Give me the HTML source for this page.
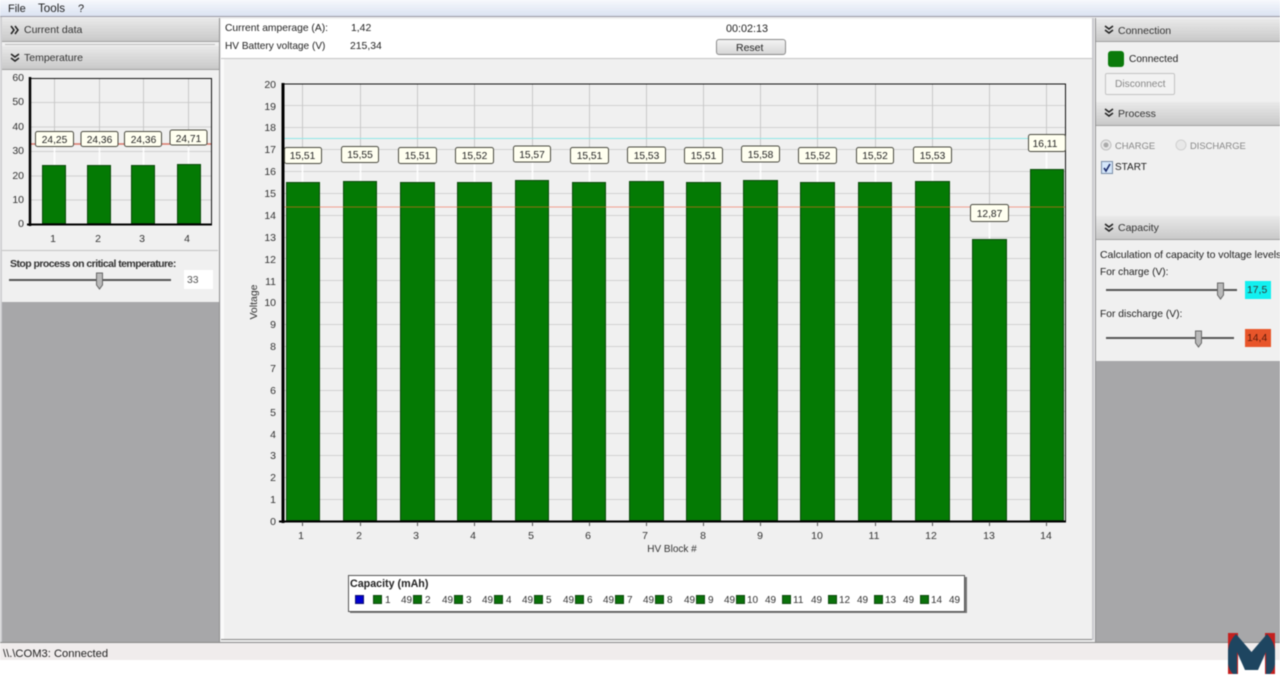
<!DOCTYPE html>
<html lang="en">
<head>
<meta charset="utf-8">
<title>Battery Monitor</title>
<style>
html,body{margin:0;padding:0;width:1280px;height:679px;overflow:hidden;background:#fff}
body{font-family:"Liberation Sans",sans-serif;font-size:10.4px;color:#222}
#root{position:absolute;left:0;top:0;width:1280px;height:679px;filter:blur(.4px);overflow:hidden}
.a{position:absolute}
.t{position:absolute;white-space:nowrap;line-height:14px;margin-top:1px}
.hd{position:absolute;background:linear-gradient(#e9e9e9,#c9c9c9);border-bottom:1px solid #a0a0a0;box-sizing:border-box}
.hd span{position:absolute;left:22px;top:5px;line-height:14px;color:#333;font-size:10.5px}
.hd svg{position:absolute;left:6px;top:7px}
svg text{font-family:"Liberation Sans",sans-serif}
</style>
</head>
<body>
<div id="root">
<!-- window bg -->
<div class="a" style="left:0;top:0;width:1280px;height:660px;background:#eeeeef"></div>
<div class="a" style="left:0;top:660px;width:1280px;height:19px;background:#fff"></div>
<div class="a" style="left:2px;top:302px;width:217px;height:341px;background:#a7a7a9"></div>
<div class="a" style="left:1096px;top:361px;width:184px;height:282px;background:#a7a7a9"></div>
<div class="a" style="left:0;top:17px;width:2px;height:626px;background:#cfcfd2"></div>
<div class="a" style="left:219px;top:18px;width:1px;height:625px;background:#8f8f8f"></div>
<div class="a" style="left:1095px;top:18px;width:1px;height:625px;background:#909092"></div>
<div class="a" style="left:1092px;top:18px;width:2px;height:622px;background:#c9c9cd"></div>
<!-- menu -->
<div class="a" style="left:0;top:0;width:1280px;height:17px;background:linear-gradient(#f6f8fc,#dbe3f2);border-bottom:1px solid #9a9aa4;box-sizing:border-box"></div>
<div class="t" style="left:8px;top:1px;font-size:11px">File</div>
<div class="t" style="left:38px;top:1px;font-size:11.600px">Tools</div>
<div class="t" style="left:78px;top:1px;font-size:11px">?</div>

<!-- left column -->
<div class="a" style="left:2px;top:18px;width:217px;height:284px;background:#f0f0f0"></div>
<div class="hd" style="left:2px;top:18px;width:217px;height:24px"><svg width="14" height="10" viewBox="0 0 10 10"><path d="M1 1l3 4-3 4M5 1l3 4-3 4" fill="none" stroke="#222" stroke-width="1.500"/></svg><span style="top:5px">Current data</span></div>
<div class="a" style="left:5px;top:44px;width:210px;height:1px;background:#bbb"></div>
<div class="hd" style="left:2px;top:46px;width:217px;height:24px"><svg width="14" height="10" viewBox="0 0 10 10"><path d="M1 1l4 3 4-3M1 5l4 3 4-3" fill="none" stroke="#222" stroke-width="1.500"/></svg><span style="top:5px">Temperature</span></div>
<div class="a" style="left:2px;top:250px;width:216px;height:1px;background:#c4c4c4"></div>

<svg class="a" style="left:0;top:70px" width="220" height="180" viewBox="0 70 220 180">
<g stroke="#cfcfcf" stroke-width="1">
<path d="M30 102.500H212M30 127H212M30 151.500H212M30 176H212M30 200H212"/>
<path d="M54.500 78V224M99.500 78V224M143.500 78V224M188.500 78V224" stroke="#c8c8c8"/>
</g>
<path d="M30 144H212" stroke="#d9786a" stroke-width="1.500"/>
<path d="M54.500 147V165M99.500 147V165M143.500 147V165M188.500 147V164" stroke="#fff" stroke-width="1.500"/>
<g fill="#047a04" stroke="#0c4a0c" stroke-width="1">
<rect x="42.500" y="165.500" width="23" height="58"/>
<rect x="87.500" y="165.500" width="23" height="58"/>
<rect x="131.500" y="165.500" width="23" height="58"/>
<rect x="177.500" y="164.500" width="23" height="59"/>
</g>
<path d="M30.500 78.500H211.500V224" fill="none" stroke="#111" stroke-width="1"/>
<path d="M30 77V226" stroke="#000" stroke-width="2.500"/>
<path d="M27 224.500H212" stroke="#000" stroke-width="2"/>
<g fill="#fffff0" stroke="#4a4a40" stroke-width="1">
<rect x="35.500" y="131.500" width="38" height="15" rx="2"/>
<rect x="81" y="131.500" width="37" height="15" rx="2"/>
<rect x="124.500" y="131.500" width="37" height="15" rx="2"/>
<rect x="170" y="130" width="37" height="15" rx="2"/>
</g>
<g font-size="10.200" fill="#222" text-anchor="middle">
<text x="54.500" y="143">24,25</text><text x="99.500" y="143">24,36</text><text x="143.500" y="143">24,36</text><text x="188.500" y="142">24,71</text>
</g>
<g font-size="10.500" fill="#333" text-anchor="end">
<text x="24" y="81">60</text><text x="24" y="105">50</text><text x="24" y="130">40</text><text x="24" y="154">30</text><text x="24" y="179">20</text><text x="24" y="203">10</text><text x="24" y="227">0</text>
</g>
<g font-size="10.500" fill="#333" text-anchor="middle">
<text x="53" y="242">1</text><text x="98" y="242">2</text><text x="142" y="242">3</text><text x="187" y="242">4</text>
</g>
</svg>
<div class="t" style="left:10px;top:256px;font-size:10.500px;font-weight:bold;letter-spacing:-.55px;color:#333">Stop process on critical temperature:</div>
<div class="a" style="left:9px;top:279px;width:162px;height:2px;background:#555"></div>
<svg class="a" style="left:95px;top:272px" width="9" height="18" viewBox="0 0 9 18"><path d="M1.500 1H7.500V13L4.500 17L1.500 13Z" fill="#b9b9b9" stroke="#666"/></svg>
<div class="a" style="left:184px;top:270px;width:29px;height:19px;background:#fff"></div>
<div class="t" style="left:187px;top:273px;color:#555">33</div>

<!-- center -->
<div class="a" style="left:221px;top:18px;width:871px;height:621px;background:#f0f0f0;border-bottom:1px solid #8a8a8a"></div>
<div class="a" style="left:221px;top:59px;width:3px;height:580px;background:#fafafa"></div>
<div class="a" style="left:221px;top:19px;width:871px;height:39px;background:#fff;border-bottom:1px solid #c4c4c4"></div>
<div class="t" style="left:225px;top:21px;font-size:10.300px">Current amperage (A):</div>
<div class="t" style="left:351px;top:21px">1,42</div>
<div class="t" style="left:225px;top:39px;font-size:10.100px">HV Battery voltage (V)</div>
<div class="t" style="left:350px;top:39px">215,34</div>
<div class="t" style="left:726px;top:21px;font-size:10.800px">00:02:13</div>
<div class="a" style="left:716px;top:39px;width:68px;height:14px;border:1px solid #8a8a8a;border-radius:3px;background:linear-gradient(#f4f4f4,#d8d8d8)"></div>
<div class="t" style="left:736px;top:40px;font-size:10.500px">Reset</div>

<svg class="a" style="left:221px;top:60px" width="870" height="578" viewBox="221 60 870 578">
<g stroke="#d2d2d2" stroke-width="1">
<path d="M283 105.500H1065M283 127.500H1065M283 149.500H1065M283 171.500H1065M283 193.500H1065M283 215.500H1065M283 237.500H1065M283 258.500H1065M283 280.500H1065M283 302.500H1065M283 324.500H1065M283 346.500H1065M283 368.500H1065M283 390.500H1065M283 411.500H1065M283 433.500H1065M283 455.500H1065M283 477.500H1065M283 499.500H1065"/>
<path stroke="#c8c8c8" d="M302.500 84V521M360.500 84V521M417.500 84V521M474.500 84V521M532.500 84V521M589.500 84V521M646.500 84V521M703.500 84V521M760.500 84V521M817.500 84V521M875.500 84V521M932.500 84V521M989.500 84V521M1046.500 84V521"/>
</g>
<path d="M283 138.500H1065" stroke="#8fe8e8" stroke-width="1"/>
<path d="M283 207H1065" stroke="#f0a090" stroke-width="1"/>
<path stroke="#fff" stroke-width="1.500" d="M302.500 163V182M360.500 163V181M417.500 163V182M474.500 163V182M532.500 161V181M589.500 163V182M646.500 163V182M703.500 163V182M760.500 161V181M817.500 163V182M875.500 163V182M932.500 163V182M989.500 222V240M1046.500 151V169"/>
<g fill="#047a04" stroke="#0c4a0c" stroke-width="1">
<rect x="286.500" y="182.500" width="33" height="338"/>
<rect x="343.500" y="181.500" width="33" height="339"/>
<rect x="400.500" y="182.500" width="34" height="338"/>
<rect x="457.500" y="182.500" width="34" height="338"/>
<rect x="515.500" y="180.500" width="33" height="340"/>
<rect x="572.500" y="182.500" width="33" height="338"/>
<rect x="629.500" y="181.500" width="34" height="339"/>
<rect x="686.500" y="182.500" width="34" height="338"/>
<rect x="743.500" y="180.500" width="34" height="340"/>
<rect x="800.500" y="182.500" width="34" height="338"/>
<rect x="858.500" y="182.500" width="33" height="338"/>
<rect x="915.500" y="181.500" width="34" height="339"/>
<rect x="972.500" y="239.500" width="34" height="281"/>
<rect x="1030.500" y="169.500" width="33" height="351"/>
</g>
<path d="M286 207H320M343 207H377M400 207H435M457 207H492M515 207H549M572 207H606M629 207H664M686 207H721M743 207H778M800 207H835M858 207H892M915 207H950M1030 207H1064" stroke="#8a7212" stroke-width="1"/>
<path d="M283.500 84H1065.500V522" fill="none" stroke="#111" stroke-width="1"/>
<path d="M283 83V523" stroke="#000" stroke-width="3"/>
<path d="M279 521.500H1066" stroke="#000" stroke-width="2"/>
<path stroke="#555" d="M302.500 522V526M360.500 522V526M417.500 522V526M474.500 522V526M532.500 522V526M589.500 522V526M646.500 522V526M703.500 522V526M760.500 522V526M817.500 522V526M875.500 522V526M932.500 522V526M989.500 522V526M1046.500 522V526"/>
<g fill="#fffff0" stroke="#4a4a40" stroke-width="1">
<rect x="284.500" y="147.500" width="37" height="16" rx="2"/>
<rect x="341.500" y="146.500" width="37" height="16" rx="2"/>
<rect x="398.500" y="147.500" width="38" height="16" rx="2"/>
<rect x="455.500" y="147.500" width="38" height="16" rx="2"/>
<rect x="513.500" y="146" width="37" height="16" rx="2"/>
<rect x="570.500" y="147.500" width="38" height="16" rx="2"/>
<rect x="627.500" y="147" width="38" height="16" rx="2"/>
<rect x="684.500" y="147.500" width="38" height="16" rx="2"/>
<rect x="741.500" y="146" width="38" height="16" rx="2"/>
<rect x="798.500" y="147.500" width="38" height="16" rx="2"/>
<rect x="856.500" y="147.500" width="37" height="16" rx="2"/>
<rect x="913.500" y="147" width="38" height="16" rx="2"/>
<rect x="970.500" y="204.500" width="38" height="17" rx="2"/>
<rect x="1028.500" y="134.500" width="37" height="17" rx="2"/>
</g>
<g font-size="10.200" fill="#222" text-anchor="middle">
<text x="302.500" y="159">15,51</text><text x="360" y="158">15,55</text><text x="417.500" y="159">15,51</text><text x="474.500" y="159">15,52</text><text x="532" y="158">15,57</text><text x="589.500" y="159">15,51</text><text x="646.500" y="159">15,53</text><text x="703.500" y="159">15,51</text><text x="760.500" y="158">15,58</text><text x="817.500" y="159">15,52</text><text x="875" y="159">15,52</text><text x="932.500" y="159">15,53</text><text x="989.500" y="217">12,87</text><text x="1045" y="147">16,11</text>
</g>
<g font-size="10.500" fill="#333" text-anchor="end">
<text x="276" y="88">20</text><text x="276" y="110">19</text><text x="276" y="131">18</text><text x="276" y="153">17</text><text x="276" y="175">16</text><text x="276" y="197">15</text><text x="276" y="219">14</text><text x="276" y="241">13</text><text x="276" y="263">12</text><text x="276" y="285">11</text><text x="276" y="306">10</text><text x="276" y="328">9</text><text x="276" y="350">8</text><text x="276" y="372">7</text><text x="276" y="394">6</text><text x="276" y="416">5</text><text x="276" y="438">4</text><text x="276" y="459">3</text><text x="276" y="481">2</text><text x="276" y="503">1</text><text x="276" y="525">0</text>
</g>
<g font-size="10.500" fill="#333" text-anchor="middle">
<text x="301" y="539">1</text><text x="359" y="539">2</text><text x="416" y="539">3</text><text x="473" y="539">4</text><text x="531" y="539">5</text><text x="588" y="539">6</text><text x="645" y="539">7</text><text x="703" y="539">8</text><text x="760" y="539">9</text><text x="817" y="539">10</text><text x="874" y="539">11</text><text x="931" y="539">12</text><text x="989" y="539">13</text><text x="1046" y="539">14</text>
</g>
<text x="672" y="552" font-size="10" fill="#333" text-anchor="middle">HV Block #</text>
<text transform="translate(257 302) rotate(-90)" font-size="10.500" fill="#333" text-anchor="middle">Voltage</text>
<!-- legend -->
<rect x="350" y="577" width="617" height="36" fill="#777"/>
<rect x="348.500" y="575.500" width="616" height="36" fill="#fff" stroke="#555"/>
<text x="350" y="587" font-size="10.700" font-weight="bold" fill="#222">Capacity (mAh)</text>
<g stroke="#0f4a0f" fill="#0a720a">
<rect x="355.500" y="595.500" width="8" height="8" fill="#0000d0" stroke="#101070"/>
<rect x="373.500" y="595.500" width="8" height="8"/><rect x="413.500" y="595.500" width="8" height="8"/><rect x="454.500" y="595.500" width="8" height="8"/><rect x="494.500" y="595.500" width="8" height="8"/><rect x="534.500" y="595.500" width="8" height="8"/><rect x="575.500" y="595.500" width="8" height="8"/><rect x="615.500" y="595.500" width="8" height="8"/><rect x="655.500" y="595.500" width="8" height="8"/><rect x="696.500" y="595.500" width="8" height="8"/><rect x="736.500" y="595.500" width="8" height="8"/><rect x="782.500" y="595.500" width="8" height="8"/><rect x="828.500" y="595.500" width="8" height="8"/><rect x="874.500" y="595.500" width="8" height="8"/><rect x="920.500" y="595.500" width="8" height="8"/>
</g>
<g font-size="10" fill="#333">
<text x="385" y="603">1</text><text x="401" y="603">49</text>
<text x="425" y="603">2</text><text x="442" y="603">49</text>
<text x="466" y="603">3</text><text x="482" y="603">49</text>
<text x="506" y="603">4</text><text x="522" y="603">49</text>
<text x="546" y="603">5</text><text x="563" y="603">49</text>
<text x="587" y="603">6</text><text x="603" y="603">49</text>
<text x="627" y="603">7</text><text x="643" y="603">49</text>
<text x="667" y="603">8</text><text x="684" y="603">49</text>
<text x="708" y="603">9</text><text x="724" y="603">49</text>
<text x="747" y="603">10</text><text x="765" y="603">49</text>
<text x="793" y="603">11</text><text x="811" y="603">49</text>
<text x="839" y="603">12</text><text x="857" y="603">49</text>
<text x="885" y="603">13</text><text x="903" y="603">49</text>
<text x="931" y="603">14</text><text x="949" y="603">49</text>
</g>
</svg>

<!-- right column -->
<div class="a" style="left:1096px;top:19px;width:184px;height:342px;background:#f0f0f0"></div>
<div class="hd" style="left:1096px;top:19px;width:184px;height:23px"><svg width="14" height="10" viewBox="0 0 10 10" style="top:6px"><path d="M1 1l4 3 4-3M1 5l4 3 4-3" fill="none" stroke="#222" stroke-width="1.500"/></svg><span>Connection</span></div>
<div class="a" style="left:1108px;top:51px;width:16px;height:16px;border-radius:3px;background:#0b7a0b"></div>
<div class="t" style="left:1129px;top:52px;font-size:10.200px">Connected</div>
<div class="a" style="left:1105px;top:73px;width:68px;height:20px;border:1px solid #c4c4c4;border-radius:2px;background:#f2f2f2"></div>
<div class="t" style="left:1115px;top:77px;color:#888;font-size:10.200px">Disconnect</div>
<div class="hd" style="left:1096px;top:102px;width:184px;height:24px"><svg width="14" height="10" viewBox="0 0 10 10" style="top:6px"><path d="M1 1l4 3 4-3M1 5l4 3 4-3" fill="none" stroke="#222" stroke-width="1.500"/></svg><span>Process</span></div>
<svg class="a" style="left:1100px;top:139px" width="90" height="12" viewBox="0 0 90 12"><circle cx="6" cy="6" r="5" fill="#e8e8e8" stroke="#c0c0c0"/><circle cx="6" cy="6" r="2.500" fill="#aaa"/><circle cx="81" cy="6" r="5" fill="#e8e8e8" stroke="#d0d0d0"/></svg>
<div class="t" style="left:1115px;top:138px;color:#888;font-size:9.400px">CHARGE</div>
<div class="t" style="left:1190px;top:138px;color:#888;font-size:9.400px">DISCHARGE</div>
<svg class="a" style="left:1101px;top:161px" width="12" height="13" viewBox="0 0 12 13"><rect x=".5" y=".5" width="11" height="12" fill="#d4e6fa" stroke="#7a8ea8"/><path d="M3 7l2 3 4-7" fill="none" stroke="#1a2a6a" stroke-width="1.600"/></svg>
<div class="t" style="left:1115px;top:160px;font-size:10px">START</div>
<div class="hd" style="left:1096px;top:216px;width:184px;height:24px"><svg width="14" height="10" viewBox="0 0 10 10"><path d="M1 1l4 3 4-3M1 5l4 3 4-3" fill="none" stroke="#222" stroke-width="1.500"/></svg><span style="top:5px">Capacity</span></div>
<div class="t" style="left:1100px;top:247px;font-size:10.500px;letter-spacing:-.05px">Calculation of capacity to voltage levels:</div>
<div class="t" style="left:1100px;top:265px;font-size:10.200px">For charge (V):</div>
<div class="a" style="left:1106px;top:289px;width:131px;height:2px;background:#555"></div>
<svg class="a" style="left:1216px;top:282px" width="9" height="18" viewBox="0 0 9 18"><path d="M1.500 1H7.500V13L4.500 17L1.500 13Z" fill="#b9b9b9" stroke="#666"/></svg>
<div class="a" style="left:1245px;top:281px;width:26px;height:18px;background:#12f0f0"></div>
<div class="t" style="left:1247px;top:283px;color:#333">17,5</div>
<div class="t" style="left:1100px;top:307px;font-size:10.300px">For discharge (V):</div>
<div class="a" style="left:1106px;top:337px;width:128px;height:2px;background:#555"></div>
<svg class="a" style="left:1194px;top:330px" width="9" height="18" viewBox="0 0 9 18"><path d="M1.500 1H7.500V13L4.500 17L1.500 13Z" fill="#b9b9b9" stroke="#666"/></svg>
<div class="a" style="left:1245px;top:329px;width:26px;height:18px;background:#e8552a"></div>
<div class="t" style="left:1247px;top:331px;color:#5a1a0a">14,4</div>

<!-- status -->
<div class="a" style="left:0;top:642px;width:1280px;height:1px;background:#8a8a8a"></div>
<div class="a" style="left:0;top:643px;width:1280px;height:17px;background:#f0ecec"></div>
<div class="t" style="left:3px;top:646px;font-size:11.200px">\\.\COM3: Connected</div>

<!-- logo -->
<svg class="a" style="left:1228px;top:632px" width="48" height="43" viewBox="0 0 48 43">
<rect x="0" y="1" width="10" height="41" fill="#c3201f"/>
<rect x="37" y="1" width="10" height="41" fill="#c3201f"/>
<path d="M0 18Q1 9 8 2L23.500 20L39 2Q46 9 47 18V32Q46 38 42 42H38V20L30 38H17L9 20V42H5Q1 38 0 32Z" fill="#1e4560"/>
</svg>
</div>
</body>
</html>
